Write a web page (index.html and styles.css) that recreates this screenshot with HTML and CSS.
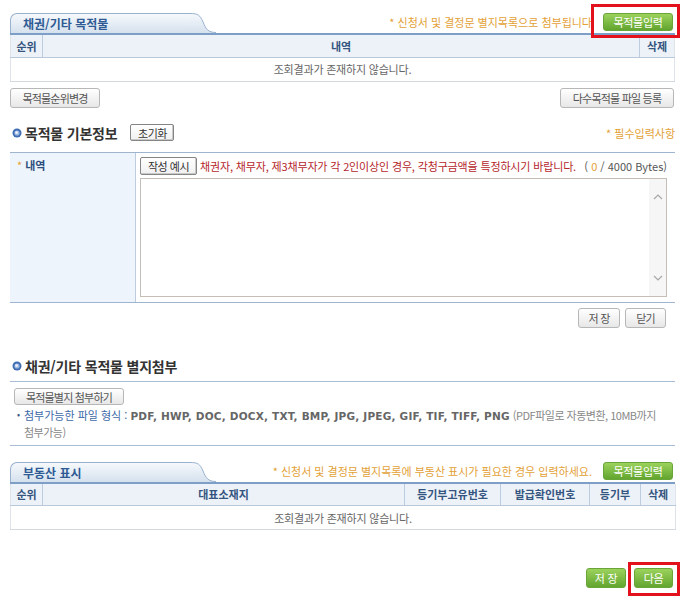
FILE: index.html
```html
<!DOCTYPE html>
<html lang="ko">
<head>
<meta charset="utf-8">
<title>목적물</title>
<link rel="stylesheet" href="styles.css">
</head>
<body>
<div class="page">
  <section class="board">
    <div class="board-head">
      <div class="tab">
        <span class="tab-label">채권/기타 목적물</span>
        <svg class="tab-curve" viewBox="0 0 26 20" width="26" height="20">
          <defs><linearGradient id="tg1" x1="0" y1="0" x2="0" y2="1"><stop offset="0" stop-color="#f6f9fc"/><stop offset="1" stop-color="#d5e1ee"/></linearGradient></defs>
          <path d="M0 0.5 C8 0.5 10 2 13 9 C16 16 18 19.5 26 19.5 L26 20 L0 20 Z" fill="url(#tg1)"/>
          <path d="M0 0.5 C8 0.5 10 2 13 9 C16 16 18 19.5 26 19.5" fill="none" stroke="#98b1cf" stroke-width="1"/>
        </svg>
      </div>
      <div class="head-right">
        <span class="note">* 신청서 및 결정문 별지목록으로 첨부됩니다</span>
        <button class="btn-green">목적물입력</button>
      </div>
    </div>
    <table class="grid">
      <colgroup><col class="w-rank"><col><col class="w-del"></colgroup>
      <thead><tr><th>순위</th><th>내역</th><th>삭제</th></tr></thead>
      <tbody><tr><td colspan="3" class="empty">조회결과가 존재하지 않습니다.</td></tr></tbody>
    </table>
  </section>

  <div class="btn-row between">
    <button class="btn-gray w-90">목적물순위변경</button>
    <button class="btn-gray w-114">다수목적물 파일 등록</button>
  </div>

  <div class="sub-head">
    <svg class="dot" viewBox="0 0 10 10" width="10" height="10"><circle cx="5" cy="5" r="4.5" fill="#3f6cb4"/><circle cx="5" cy="5" r="2.6" fill="#9fb9e0"/><circle cx="4.6" cy="4.6" r="1.4" fill="#eef3fb"/></svg>
    <h3 class="sub-title">목적물 기본정보</h3>
    <button class="btn-sys w-44">초기화</button>
    <span class="req">* 필수입력사항</span>
  </div>

  <div class="form">
    <div class="form-label"><span class="star">*</span> 내역</div>
    <div class="form-body">
      <div class="line1">
        <button class="btn-sys w-57">작성 예시</button>
        <span class="warn">채권자, 채무자, 제3채무자가 각 2인이상인 경우, 각청구금액을 특정하시기 바랍니다.</span>
        <span class="count">( <em>0</em> / 4000 Bytes)</span>
      </div>
      <div class="textbox">
        <textarea class="ta" aria-label="내역"></textarea>
        <div class="scroll">
          <svg viewBox="0 0 10 6" width="10" height="6"><path d="M1 5 L5 1 L9 5" fill="none" stroke="#a8a8a8" stroke-width="1.2"/></svg>
          <svg viewBox="0 0 10 6" width="10" height="6"><path d="M1 1 L5 5 L9 1" fill="none" stroke="#a8a8a8" stroke-width="1.2"/></svg>
        </div>
      </div>
    </div>
  </div>

  <div class="btn-row end mid">
    <button class="btn-gray w-42">저 장</button>
    <button class="btn-gray w-41">닫기</button>
  </div>

  <div class="sub-head second">
    <svg class="dot" viewBox="0 0 10 10" width="10" height="10"><circle cx="5" cy="5" r="4.5" fill="#3f6cb4"/><circle cx="5" cy="5" r="2.6" fill="#9fb9e0"/><circle cx="4.6" cy="4.6" r="1.4" fill="#eef3fb"/></svg>
    <h3 class="sub-title">채권/기타 목적물 별지첨부</h3>
  </div>

  <div class="attach">
    <button class="btn-gray w-110 short">목적물별지 첨부하기</button>
    <div class="types">
      <span class="bullet">•</span>
      <p class="types-text"><span class="types-label">첨부가능한 파일 형식 : </span><b class="types-list">PDF, HWP, DOC, DOCX, TXT, BMP, JPG, JPEG, GIF, TIF, TIFF, PNG</b> <span class="types-note">(PDF파일로 자동변환, 10MB까지<br>첨부가능)</span></p>
    </div>
  </div>

  <section class="board third">
    <div class="board-head">
      <div class="tab">
        <span class="tab-label">부동산 표시</span>
        <svg class="tab-curve" viewBox="0 0 26 20" width="26" height="20">
          <defs><linearGradient id="tg2" x1="0" y1="0" x2="0" y2="1"><stop offset="0" stop-color="#f6f9fc"/><stop offset="1" stop-color="#d5e1ee"/></linearGradient></defs>
          <path d="M0 0.5 C8 0.5 10 2 13 9 C16 16 18 19.5 26 19.5 L26 20 L0 20 Z" fill="url(#tg2)"/>
          <path d="M0 0.5 C8 0.5 10 2 13 9 C16 16 18 19.5 26 19.5" fill="none" stroke="#98b1cf" stroke-width="1"/>
        </svg>
      </div>
      <div class="head-right">
        <span class="note">* 신청서 및 결정문 별지목록에 부동산 표시가 필요한 경우 입력하세요.</span>
        <button class="btn-green">목적물입력</button>
      </div>
    </div>
    <table class="grid">
      <colgroup><col class="w-rank"><col class="w-addr"><col class="w-reg"><col class="w-iss"><col class="w-book"><col class="w-del"></colgroup>
      <thead><tr><th>순위</th><th>대표소재지</th><th>등기부고유번호</th><th>발급확인번호</th><th>등기부</th><th>삭제</th></tr></thead>
      <tbody><tr><td colspan="6" class="empty">조회결과가 존재하지 않습니다.</td></tr></tbody>
    </table>
  </section>

  <div class="btn-row end bottom">
    <button class="btn-green big">저 장</button>
    <button class="btn-green big w-39">다음</button>
  </div>

  <div class="mark mark-top"></div>
  <div class="mark mark-next"></div>
</div>
</body>
</html>
```

FILE: styles.css
```css
* { box-sizing: border-box; }
html, body { margin: 0; padding: 0; background: #fff; overflow: hidden; }
body {
  font-family: "Noto Sans CJK KR", "Noto Sans", sans-serif;
  font-size: 11px;
  line-height: 14px;
  color: #555;
}
button { font-family: inherit; font-size: 11px; cursor: pointer; padding: 0; }

.page {
  position: relative;
  width: 684px;
  height: 600px;
  padding: 13px 9px 0 10px;
}

/* board with tab */
.board-head {
  display: flex;
  justify-content: space-between;
  height: 22px;
  border-bottom: 2px solid #7d9ec6;
}
.tab { display: flex; height: 20px; }
.tab-label {
  width: 180px;
  height: 20px;
  padding-left: 12px;
  border: 1px solid #98b1cf;
  border-right: 0;
  border-bottom: 0;
  border-top-left-radius: 7px;
  background: linear-gradient(#f6f9fc, #d5e1ee);
  font-size: 12px;
  font-weight: bold;
  color: #2f5b94;
  letter-spacing: 0;
  line-height: 19px;
}
.tab-curve { display: block; }
.head-right { display: flex; align-items: flex-start; gap: 11px; margin-right: 2px; }
.note {
  color: #e3a136;
  letter-spacing: 0;
  margin-top: 2px;
}
.btn-green {
  height: 18px;
  width: 70px;
  border: 1px solid #6aa53a;
  border-radius: 3px;
  background: linear-gradient(#9bd25c, #62a52f);
  color: #fff;
  letter-spacing: -0.3px;
}
.btn-green.big { height: 20px; width: 40px; }
.btn-green.w-39 { width: 39px; }

.grid {
  width: 665px;
  border-collapse: collapse;
  table-layout: fixed;
  border-left: 1px solid #dfe4ea;
  border-right: 1px solid #dfe4ea;
}
.w-rank { width: 32px; }
.w-del { width: 35px; }
.w-addr { width: 362px; }
.w-reg { width: 96px; }
.w-iss { width: 89px; }
.w-book { width: 51px; }
.grid th {
  height: 22px;
  padding: 0;
  background: #edf2f9;
  border-left: 1px solid #bdcde0;
  border-bottom: 1px solid #b9c9dc;
  font-weight: bold;
  color: #34557f;
  letter-spacing: 0;
}
.grid th:first-child { border-left: 0; }
.grid td.empty {
  height: 24px;
  padding: 0;
  text-align: center;
  border-bottom: 1px solid #d3d9e0;
  color: #666;
  letter-spacing: -0.2px;
}

/* button rows */
.btn-row { display: flex; margin-top: 6px; }
.between { justify-content: space-between; padding-right: 1px; }
.end { justify-content: flex-end; }
.btn-gray {
  height: 20px;
  border: 1px solid #b7b7b7;
  border-radius: 3px;
  background: linear-gradient(#ffffff, #e7e7e7);
  color: #555;
  letter-spacing: -0.8px;
}
.btn-gray.short { height: 17px; }
.w-90 { width: 90px; }
.w-114 { width: 114px; }
.w-42 { width: 42px; }
.w-41 { width: 41px; }
.w-110 { width: 110px; }
.mid { margin-top: 5px; gap: 5px; padding-right: 9px; }
.bottom { margin-top: 38px; gap: 8px; padding-right: 2px; }

.btn-sys {
  height: 17px;
  border: 1px solid #858585;
  border-radius: 2px;
  background: linear-gradient(#ffffff, #f0f0f0);
  box-shadow: inset -1px -1px 0 #c9c9c9;
  color: #333;
  letter-spacing: -0.5px;
}
.w-44 { width: 44px; }
.w-57 { width: 57px; height: 18px; }

/* sub heading */
.sub-head {
  display: flex;
  align-items: center;
  height: 18px;
  margin-top: 16px;
}
.sub-head.second { margin-top: 29px; }
.dot { display: block; margin-left: 2px; margin-right: 3px; }
.sub-title {
  margin: 0;
  font-size: 14px;
  line-height: 18px;
  font-weight: bold;
  color: #333;
  letter-spacing: -0.2px;
}
.sub-head .btn-sys { margin-left: 13px; }
.req { margin-left: auto; color: #e3a136; letter-spacing: 0; }

/* form */
.form {
  display: flex;
  height: 151px;
  margin-top: 10px;
  border-top: 1px solid #9fb4cd;
  border-bottom: 1px solid #9fb4cd;
}
.form-label {
  width: 126px;
  background: #eef4fb;
  border-right: 1px solid #bccbdd;
  padding: 5px 0 0 7px;
  font-weight: bold;
  color: #2d4e7e;
  letter-spacing: 0;
}
.star { color: #e3a136; font-weight: normal; }
.form-body { flex: 1; padding: 4px 8px 4px 4px; }
.line1 { display: flex; align-items: center; height: 18px; }
.warn { margin-left: 3px; color: #b5262b; letter-spacing: -0.15px; }
.count { margin-left: auto; color: #555; }
.count em { font-style: normal; color: #e3a136; }
.textbox {
  display: flex;
  height: 119px;
  margin-top: 3px;
  border: 1px solid #c5beb6;
}
.ta { flex: 1; border: 0; resize: none; outline: none; padding: 2px; font-family: inherit; }
.scroll {
  width: 17px;
  background: #f6f6f6;
  display: flex;
  flex-direction: column;
  justify-content: space-between;
  align-items: center;
  padding: 15px 0 15px;
}
.scroll svg { display: block; }

/* attach */
.attach {
  margin-top: 6px;
  padding: 6px 0 5px 4px;
  border-top: 1px solid #a9bcd3;
  border-bottom: 1px solid #a9bcd3;
}
.types { display: flex; margin-top: 2px; line-height: 16px; }
.bullet { width: 10px; padding-left: 3px; color: #3a5a86; font-size: 9px; }
.types-text { margin: 0; }
.types-label { color: #3d69a8; letter-spacing: 0; }
.types-list { font-family: "DejaVu Sans", Verdana, sans-serif; font-size: 10.5px; color: #666; letter-spacing: 0.2px; }
.types-note { color: #888; letter-spacing: -0.5px; }

.third { margin-top: 16px; }

/* annotation marks */
.mark { position: absolute; border: 3px solid #e3111b; }
.mark-top { left: 591px; top: 4px; width: 89px; height: 34px; }
.mark-next { left: 628px; top: 562px; width: 52px; height: 34px; }
```
